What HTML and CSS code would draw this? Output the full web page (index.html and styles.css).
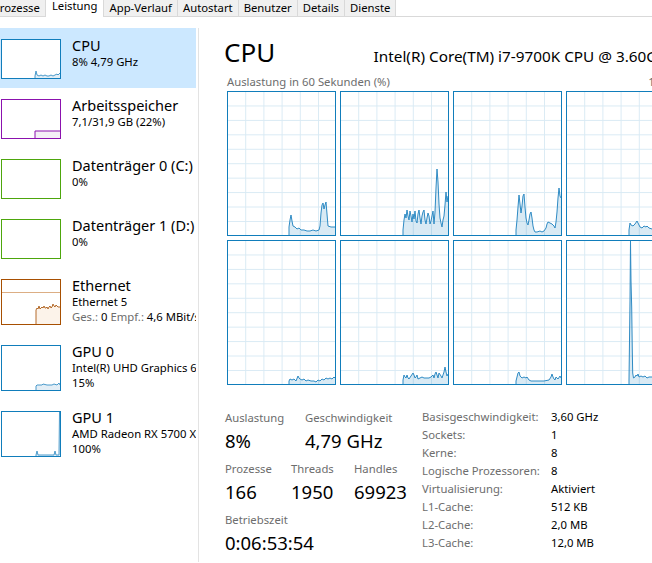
FILE: index.html
```html
<!DOCTYPE html>
<html lang="de">
<head>
<meta charset="utf-8">
<title>Task-Manager – Leistung</title>
<link rel="stylesheet" href="styles.css">
</head>
<body>
<div class="tabs">
  <div class="tab">Prozesse</div>
  <div class="tab active">Leistung</div>
  <div class="tab">App-Verlauf</div>
  <div class="tab">Autostart</div>
  <div class="tab">Benutzer</div>
  <div class="tab">Details</div>
  <div class="tab">Dienste</div>
</div>
<div class="content">
  <div class="sidebar">
    <div class="item selected">
      <div class="thumb cpu"><svg viewBox="0 0 58 38" preserveAspectRatio="none"><polygon class="fill" points="33,38 33,36 34,31 35,35 37,36 39,35 41,36 43,35 45,36 47,36 49,35 51,36 53,35 55,34 56,35 58,33 58,38"/><polyline class="line" points="33,38 33,36 34,31 35,35 37,36 39,35 41,36 43,35 45,36 47,36 49,35 51,36 53,35 55,34 56,35 58,33"/></svg></div>
      <div class="info"><div class="name">CPU</div><div class="sub">8% 4,79 GHz</div></div>
    </div>
    <div class="item">
      <div class="thumb mem"><svg viewBox="0 0 58 38" preserveAspectRatio="none"><polygon class="fill" points="33,38 33,31 58,31 58,38"/><polyline class="line" points="33,38 33,31 58,31"/></svg></div>
      <div class="info"><div class="name">Arbeitsspeicher</div><div class="sub">7,1/31,9 GB (22%)</div></div>
    </div>
    <div class="item">
      <div class="thumb disk"></div>
      <div class="info"><div class="name">Datenträger 0 (C:)</div><div class="sub">0%</div></div>
    </div>
    <div class="item">
      <div class="thumb disk"></div>
      <div class="info"><div class="name">Datenträger 1 (D:)</div><div class="sub">0%</div></div>
    </div>
    <div class="item tall">
      <div class="thumb net"><svg viewBox="0 0 58 44" preserveAspectRatio="none"><line class="scale" x1="0" y1="12.5" x2="58" y2="12.5"/><polygon class="fill" points="34,44 34,30 35,28 36,29 37,26 38,29 39,28 40,27 41,28 42,26 43,28 44,28 45,27 46,29 47,27 48,26 49,28 50,27 51,24 52,26 53,27 54,25 55,26 56,27 58,27 58,44"/><polyline class="line" points="34,44 34,30 35,28 36,29 37,26 38,29 39,28 40,27 41,28 42,26 43,28 44,28 45,27 46,29 47,27 48,26 49,28 50,27 51,24 52,26 53,27 54,25 55,26 56,27 58,27"/></svg></div>
      <div class="info"><div class="name">Ethernet</div><div class="sub">Ethernet 5</div><div class="sub"><span class="dim">Ges.:</span> 0 <span class="dim">Empf.:</span> 4,6 MBit/s</div></div>
    </div>
    <div class="item tall">
      <div class="thumb gpu"><svg viewBox="0 0 58 44" preserveAspectRatio="none"><polygon class="fill" points="34,44 34,40 35,39 40,39 41,38 45,39 50,39 52,38 55,39 57,37 58,39 58,44"/><polyline class="line" points="34,44 34,40 35,39 40,39 41,38 45,39 50,39 52,38 55,39 57,37 58,39"/></svg></div>
      <div class="info"><div class="name">GPU 0</div><div class="sub">Intel(R) UHD Graphics 630</div><div class="sub">15%</div></div>
    </div>
    <div class="item tall">
      <div class="thumb gpu"><svg viewBox="0 0 58 44" preserveAspectRatio="none"><polygon class="fill" points="34,44 34,43 35,39 36,43 40,43 50,43 52,43 53,39 54,43 57,43 57.5,0 58,0 58,44"/><polyline class="line" points="34,44 34,43 35,39 36,43 40,43 50,43 52,43 53,39 54,43 57,43 57.5,0 58,0"/></svg></div>
      <div class="info"><div class="name">GPU 1</div><div class="sub">AMD Radeon RX 5700 XT</div><div class="sub">100%</div></div>
    </div>
  </div>

  <div class="main">
    <div class="head">
      <div class="title">CPU</div>
      <div class="model">Intel(R) Core(TM) i7-9700K CPU @ 3.60GHz</div>
    </div>
    <div class="axis"><span>Auslastung in 60 Sekunden (%)</span><span>100%</span></div>
    <div class="graphs">
      <div class="graph"><svg viewBox="0 0 107 143" preserveAspectRatio="none"><polygon class="fill" points="61,143 61,135 62,128 63,123 64,129 65,134 67,135 69,137 71,136 73,138 76,138 79,139 82,139 85,138 88,139 91,138 92,134 93,121 94,113 95,111 96,117 97,113 98,110 99,122 100,134 103,135 107,135 107,143"/><polyline class="line" points="61,143 61,135 62,128 63,123 64,129 65,134 67,135 69,137 71,136 73,138 76,138 79,139 82,139 85,138 88,139 91,138 92,134 93,121 94,113 95,111 96,117 97,113 98,110 99,122 100,134 103,135 107,135"/></svg></div>
      <div class="graph"><svg viewBox="0 0 107 143" preserveAspectRatio="none"><polygon class="fill" points="62,143 62,138 63,128 64,122 65,126 66,118 67,124 68,128 69,119 70,124 71,130 72,122 73,127 74,119 75,129 76,131 77,122 78,118 79,126 80,132 81,124 82,120 83,118 84,128 85,132 86,126 87,121 88,124 89,132 90,129 91,124 92,119 93,132 94,120 95,96 96,77 97,90 98,112 99,126 100,131 101,135 102,128 103,124 104,113 105,100 106,110 107,104 107,143"/><polyline class="line" points="62,143 62,138 63,128 64,122 65,126 66,118 67,124 68,128 69,119 70,124 71,130 72,122 73,127 74,119 75,129 76,131 77,122 78,118 79,126 80,132 81,124 82,120 83,118 84,128 85,132 86,126 87,121 88,124 89,132 90,129 91,124 92,119 93,132 94,120 95,96 96,77 97,90 98,112 99,126 100,131 101,135 102,128 103,124 104,113 105,100 106,110 107,104"/></svg></div>
      <div class="graph"><svg viewBox="0 0 107 143" preserveAspectRatio="none"><polygon class="fill" points="62,143 62,138 63,128 64,115 65,103 66,112 67,121 68,114 69,104 70,102 71,115 72,126 73,131 74,133 75,128 76,122 77,120 78,126 79,134 80,138 81,140 83,140 86,139 88,140 90,139 92,136 93,132 94,130 96,131 98,132 100,134 101,136 102,130 103,120 104,106 105,96 106,104 107,106 107,143"/><polyline class="line" points="62,143 62,138 63,128 64,115 65,103 66,112 67,121 68,114 69,104 70,102 71,115 72,126 73,131 74,133 75,128 76,122 77,120 78,126 79,134 80,138 81,140 83,140 86,139 88,140 90,139 92,136 93,132 94,130 96,131 98,132 100,134 101,136 102,130 103,120 104,106 105,96 106,104 107,106"/></svg></div>
      <div class="graph"><svg viewBox="0 0 107 143" preserveAspectRatio="none"><polygon class="fill" points="62,143 62,138 63,131 64,133 66,134 68,132 70,129 71,131 73,135 75,136 77,134 79,135 80,134 82,136 85,137 90,138 95,137 100,138 107,137 107,143"/><polyline class="line" points="62,143 62,138 63,131 64,133 66,134 68,132 70,129 71,131 73,135 75,136 77,134 79,135 80,134 82,136 85,137 90,138 95,137 100,138 107,137"/></svg></div>
      <div class="graph"><svg viewBox="0 0 107 143" preserveAspectRatio="none"><polygon class="fill" points="61,143 61,140 62,138 64,139 66,138 68,140 70,135 71,137 72,138 74,139 76,138 78,140 80,139 83,140 86,140 88,141 90,139 92,140 94,138 96,139 98,137 100,138 102,137 104,138 106,136 107,137 107,143"/><polyline class="line" points="61,143 61,140 62,138 64,139 66,138 68,140 70,135 71,137 72,138 74,139 76,138 78,140 80,139 83,140 86,140 88,141 90,139 92,140 94,138 96,139 98,137 100,138 102,137 104,138 106,136 107,137"/></svg></div>
      <div class="graph"><svg viewBox="0 0 107 143" preserveAspectRatio="none"><polygon class="fill" points="62,143 62,139 63,134 64,136 65,137 66,134 67,137 68,138 70,135 72,132 73,134 74,137 75,136 76,134 77,138 79,137 81,136 83,137 86,137 88,137 90,136 92,134 93,137 94,133 95,131 96,134 97,137 98,132 100,135 101,137 102,134 103,131 104,126 105,131 106,135 107,133 107,143"/><polyline class="line" points="62,143 62,139 63,134 64,136 65,137 66,134 67,137 68,138 70,135 72,132 73,134 74,137 75,136 76,134 77,138 79,137 81,136 83,137 86,137 88,137 90,136 92,134 93,137 94,133 95,131 96,134 97,137 98,132 100,135 101,137 102,134 103,131 104,126 105,131 106,135 107,133"/></svg></div>
      <div class="graph"><svg viewBox="0 0 107 143" preserveAspectRatio="none"><polygon class="fill" points="62,143 62,140 63,136 64,132 65,131 66,135 68,137 70,136 72,137 73,136 75,139 77,140 80,140 85,140 90,140 95,139 97,136 98,133 99,136 100,138 101,139 102,136 104,138 106,135 107,137 107,143"/><polyline class="line" points="62,143 62,140 63,136 64,132 65,131 66,135 68,137 70,136 72,137 73,136 75,139 77,140 80,140 85,140 90,140 95,139 97,136 98,133 99,136 100,138 101,139 102,136 104,138 106,135 107,137"/></svg></div>
      <div class="graph"><svg viewBox="0 0 107 143" preserveAspectRatio="none"><polygon class="fill" points="62,143 62,139 63,60 63.5,0 64,40 64.7,66 65.3,110 65.7,132 66.5,137 68,136 69,134 70,135 71,133 72,136 74,135 76,136 78,135 80,137 82,136 85,136 90,137 95,136 100,137 107,137 107,143"/><polyline class="line" points="62,143 62,139 63,60 63.5,0 64,40 64.7,66 65.3,110 65.7,132 66.5,137 68,136 69,134 70,135 71,133 72,136 74,135 76,136 78,135 80,137 82,136 85,136 90,137 95,136 100,137 107,137"/></svg></div>
    </div>

    <div class="stats">
      <div class="dyn">
        <div class="row">
          <div class="stat c80"><div class="label">Auslastung</div><div class="value">8%</div></div>
          <div class="stat"><div class="label">Geschwindigkeit</div><div class="value">4,79 GHz</div></div>
        </div>
        <div class="row">
          <div class="stat c66"><div class="label">Prozesse</div><div class="value">166</div></div>
          <div class="stat c63"><div class="label">Threads</div><div class="value">1950</div></div>
          <div class="stat"><div class="label">Handles</div><div class="value">69923</div></div>
        </div>
        <div class="row">
          <div class="stat"><div class="label">Betriebszeit</div><div class="value">0:06:53:54</div></div>
        </div>
      </div>
      <div class="specs">
        <div class="k">Basisgeschwindigkeit:</div><div class="v">3,60 GHz</div>
        <div class="k">Sockets:</div><div class="v">1</div>
        <div class="k">Kerne:</div><div class="v">8</div>
        <div class="k">Logische Prozessoren:</div><div class="v">8</div>
        <div class="k">Virtualisierung:</div><div class="v">Aktiviert</div>
        <div class="k">L1-Cache:</div><div class="v">512 KB</div>
        <div class="k">L2-Cache:</div><div class="v">2,0 MB</div>
        <div class="k">L3-Cache:</div><div class="v">12,0 MB</div>
      </div>
    </div>
  </div>
</div>
</body>
</html>
```

FILE: styles.css
```css
* { box-sizing: border-box; margin: 0; padding: 0; }

html, body {
  width: 652px;
  height: 563px;
  overflow: hidden;
  background: #fff;
}

body {
  font-family: "Noto Sans", "Open Sans", "DejaVu Sans", sans-serif;
  font-size: 11.3px;
  color: #000;
}

/* ---------- tabs ---------- */
.tabs {
  display: flex;
  align-items: flex-start;
  height: 17px;
  margin-left: -12px;
  border-bottom: 1px solid #d9d9d9;
}

.tab {
  height: 16px;
  padding: 1px 5px 0;
  line-height: 14px;
  background: #f0f0f0;
  border-left: 1px solid #d9d9d9;
  border-right: 1px solid #d9d9d9;
  margin-left: -1px;
  white-space: nowrap;
}

.tab.active {
  height: 17px;
  padding: 0 6px;
  line-height: 11px;
  background: #fff;
  position: relative;
  z-index: 1;
}

/* ---------- layout ---------- */
.content {
  display: flex;
  padding-top: 11px;
}

.sidebar {
  width: 198px;
  flex: none;
}

.item {
  width: 196px;
  display: flex;
  gap: 11px;
  padding: 11px 0 9px 1px;
  overflow: hidden;
  white-space: nowrap;
}

.item.selected { background: #cce8ff; }

.thumb {
  width: 60px;
  height: 40px;
  flex: none;
  border: 1px solid;
  background: #fff;
}

.item.tall .thumb { height: 46px; }

.thumb svg, .graph svg {
  display: block;
  width: 100%;
  height: 100%;
}

.thumb.cpu, .thumb.gpu { border-color: #117dbb; }
.thumb.mem { border-color: #8b12ae; }
.thumb.disk { border-color: #4da60c; }
.thumb.net { border-color: #a74f01; }

.fill { stroke: none; }
.line { fill: none; stroke-width: 1; vector-effect: non-scaling-stroke; }

.cpu .fill, .gpu .fill { fill: #e3eef6; }
.cpu .line, .gpu .line { stroke: #4a9acb; }
.mem .fill { fill: #f4eff6; }
.mem .line { stroke: #8b12ae; }
.net .fill { fill: #fcf3ea; }
.net .line { stroke: #b46a2a; }
.net .scale { stroke: #dcae84; stroke-width: 1; vector-effect: non-scaling-stroke; }

.info {
  margin-top: -3px;
  min-width: 0;
}

.name {
  font-size: 14.5px;
  line-height: 18px;
}

.sub {
  font-size: 11.3px;
  line-height: 15px;
}

.dim { color: #6d6d6d; }

/* ---------- main pane ---------- */
.main {
  flex: none;
  width: 478px;
  border-left: 1px solid #e3e3e3;
  padding: 8px 0 0 25px;
}

.head {
  display: flex;
  align-items: baseline;
  justify-content: space-between;
  width: 452px;
  white-space: nowrap;
}

.title {
  font-size: 26px;
  line-height: 32px;
}

.model {
  font-size: 15.3px;
}

.axis {
  display: flex;
  justify-content: space-between;
  width: 450px;
  margin: 6px 0 0 3px;
  line-height: 15px;
  color: #6d6d6d;
}

.graphs {
  display: grid;
  grid-template-columns: repeat(4, 109px);
  grid-auto-rows: 145px;
  gap: 4px;
  margin: 2px 0 0 3px;
}

.graph {
  border: 1px solid #117dbb;
  background-color: #fff;
  background-image:
    linear-gradient(to right, transparent calc(100% - 1px), #d9eaf4 calc(100% - 1px)),
    linear-gradient(to bottom, transparent calc(100% - 1px), #d9eaf4 calc(100% - 1px));
  background-size: 18.2px 100%, 100% 14.45px;
}

.graph .fill { fill: rgba(17, 125, 187, 0.16); }
.graph .line { stroke: #2f8bc4; }

/* ---------- statistics ---------- */
.stats {
  display: flex;
  margin: 24px 0 0 1px;
}

.dyn {
  width: 197px;
  flex: none;
}

.row {
  display: flex;
  margin-bottom: 7px;
}

.c80 { width: 80px; }
.c66 { width: 66px; }
.c63 { width: 63px; }

.label {
  line-height: 18px;
  color: #6d6d6d;
  white-space: nowrap;
}

.value {
  margin-top: 2px;
  font-size: 18.5px;
  line-height: 24px;
  white-space: nowrap;
}

.specs {
  display: grid;
  grid-template-columns: 129px auto;
  grid-auto-rows: 18px;
  line-height: 18px;
  margin-top: -1px;
  white-space: nowrap;
}

.specs .k { color: #6d6d6d; }
```
